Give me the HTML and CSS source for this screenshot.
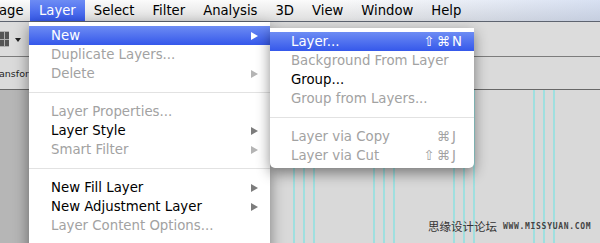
FILE: index.html
```html
<!DOCTYPE html>
<html lang="en">
<head>
  <meta charset="UTF-8" />
  <meta name="viewport" content="width=device-width,initial-scale=1" />
  <title>Layer menu</title>
  <link rel="stylesheet" href="styles.css">
</head>
<body>
  <div class="menubar">
    <span class="mb-item cut">age</span>
    <span class="mb-item active">Layer</span>
    <span class="mb-item">Select</span>
    <span class="mb-item">Filter</span>
    <span class="mb-item">Analysis</span>
    <span class="mb-item">3D</span>
    <span class="mb-item">View</span>
    <span class="mb-item">Window</span>
    <span class="mb-item">Help</span>
  </div>

  <div class="app">
    <div class="optbar">
      <span class="tool-icon"><i></i><i></i><i></i><i></i></span>
      <span class="caret"></span>
    </div>
    <div class="optbar2"><span class="opt-text">ansfor</span></div>
    <div class="workspace">
      <div class="panel"></div>
      <div class="canvas"></div>
    </div>
  </div>

  <!-- Layer menu -->
  <div class="menu main">
    <div class="item hl">New<span class="arrow"></span></div>
    <div class="item off">Duplicate Layers...</div>
    <div class="item off">Delete<span class="arrow"></span></div>
    <div class="sep"></div>
    <div class="item off">Layer Properties...</div>
    <div class="item">Layer Style<span class="arrow"></span></div>
    <div class="item off">Smart Filter<span class="arrow"></span></div>
    <div class="sep"></div>
    <div class="item">New Fill Layer<span class="arrow"></span></div>
    <div class="item">New Adjustment Layer<span class="arrow"></span></div>
    <div class="item off">Layer Content Options...</div>
    <div class="sep"></div>
  </div>

  <!-- New submenu -->
  <div class="menu sub">
    <div class="item hl">Layer...<span class="keys"><span class="mods">⇧⌘</span><span class="key">N</span></span></div>
    <div class="item off">Background From Layer</div>
    <div class="item">Group...</div>
    <div class="item off">Group from Layers...</div>
    <div class="sep"></div>
    <div class="item off">Layer via Copy<span class="keys"><span class="mods">⌘</span><span class="key">J</span></span></div>
    <div class="item off">Layer via Cut<span class="keys"><span class="mods">⇧⌘</span><span class="key">J</span></span></div>
  </div>

  <div class="watermark"><span class="wm-cn">思缘设计论坛</span><span class="wm-url">WWW.MISSYUAN.COM</span></div>
</body>
</html>
```

FILE: styles.css
```css
/* Base */
body { margin: 0; width: 600px; height: 243px; overflow: hidden; position: relative; font-family: "DejaVu Sans", sans-serif; font-size: 13px; color: #000; background: #d9d9d9; }

/* Menu bar */
.menubar { height: 21px; display: flex; align-items: center; border-bottom: 1px solid #5e6470;
  background: linear-gradient(to right, rgba(255,255,255,0) 55%, rgba(150,175,225,.35) 100%), linear-gradient(#fbfbfb, #dedede); }
.mb-item { height: 21px; line-height: 21px; padding: 0 9px; font-size: 13.2px; white-space: nowrap; }
.mb-item.cut { padding: 0; width: 30px; text-indent: -1px; }
.mb-item.active { color: #fff; background: linear-gradient(#6d8cf4, #3558ea); }

/* Photoshop panels behind the menus */
.app { display: flex; flex-direction: column; height: 221px; }
.optbar { height: 34px; display: flex; align-items: center; gap: 6px; background: #dcdcdc; border-bottom: 1px solid #7c7c7c; }
.tool-icon { width: 9px; height: 14px; display: grid; grid-template-columns: 1fr 1fr; gap: 1px; padding: 1px 0; background: #b0b0b0; }
.tool-icon i { background: #555; }
.caret { width: 0; height: 0; border-left: 3px solid transparent; border-right: 3px solid transparent; border-top: 4px solid #222; margin-top: 1px; }
.optbar2 { height: 32px; display: flex; align-items: center; background: #dadada; border-bottom: 1px solid #676767; }
.opt-text { font-size: 9.5px; color: #222; margin-left: -1px; }
.workspace { flex: 1; display: flex; }
.panel { width: 40px; background: #b6b6b6; }
.canvas { flex: 1; background-color: #d9d9d9;
  background-image: repeating-linear-gradient(to right, transparent 0 13px, #9fdfdf 13px 15px, transparent 15px 23px, #9fdfdf 23px 25px, transparent 25px 33px, #9fdfdf 33px 35px, transparent 35px 80px); }

/* Menus */
.menu { position: absolute; background: #fff; box-shadow: 0 5px 14px rgba(0,0,0,.45); font-size: 13.3px; }
.menu.main { left: 29px; top: 22px; width: 241px; padding-top: 4px; }
.menu.sub { left: 270px; top: 28px; width: 204px; padding: 4px 0 3px; border-radius: 0 0 5px 5px; }
.item { height: 19px; line-height: 19px; padding: 0 12px 0 22px; display: flex; align-items: center; justify-content: space-between; white-space: nowrap; }
.sub .item { padding-left: 21px; }
.item.off { color: #a2a2a2; }
.item.hl { color: #fff; background: linear-gradient(#6d8cf4, #3558ea); }
.sep { height: 19px; display: flex; align-items: center; }
.sep::before { content: ""; flex: 1; height: 1px; background: #e2e2e2; }
.arrow { width: 0; height: 0; border-top: 4.5px solid transparent; border-bottom: 4.5px solid transparent; border-left: 7px solid #7c7c7c; }
.off .arrow { border-left-color: #b4b4b4; }
.hl .arrow { border-left-color: #fff; }
.keys { display: flex; }
.keys .key { width: 10px; }
.keys .mods { letter-spacing: 2px; }

/* Watermark */
.watermark { position: absolute; left: 428px; top: 218px; display: flex; align-items: center; gap: 6px; }
.wm-cn { font-family: "Noto Sans CJK SC", sans-serif; font-size: 11.5px; color: #333; }
.wm-url { font-family: "DejaVu Sans Mono", monospace; font-size: 8px; font-weight: bold; letter-spacing: .7px; color: #444; }
```
